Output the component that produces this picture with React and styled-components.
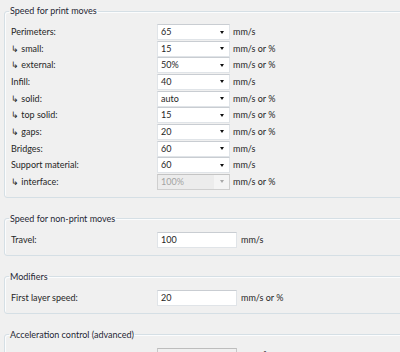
import React from 'react';
import styled, { createGlobalStyle } from 'styled-components';

const GlobalStyle = createGlobalStyle`
    html, body {
        margin: 0;
        padding: 0;
        background: #f0f0f0;
        overflow: hidden;
    }
    body {
        font-family: Lato, "Liberation Sans", sans-serif;
        font-size: 9px;
        color: #262626;
    }
`

const Page = styled.div`
    padding-top: 5px;
    width: 420px;
    display: flex;
    flex-direction: column;
    gap: 15px;
`

const Group = styled.fieldset`
    margin: 0 0 0 4px;
    padding: 7px 0 7px 6px;
    border: 1px solid #d5dfe5;
    border-radius: 3px;
    box-shadow: inset 1px 1px 0 #fbfcfd;
    min-width: 0;
`

const Legend = styled.legend`
    padding: 0 1px;
    margin-left: -2px;
    line-height: 12px;
    color: #1e2633;
`

const Rows = styled.div`
    display: grid;
    grid-template-columns: 146px auto 1fr;
    grid-auto-rows: 16px;
    row-gap: 0.67px;
    align-items: center;
`

const Label = styled.div`
    line-height: 16px;
    white-space: nowrap;
`

const Unit = styled.div`
    padding-left: ${p => p.$wide ? 4 : 3}px;
    line-height: 16px;
    white-space: nowrap;
`

const Combo = styled.div`
    box-sizing: border-box;
    width: 73px;
    height: 16px;
    display: flex;
    align-items: center;
    background: ${p => p.$disabled ? '#f4f4f4' : '#fff'};
    border: 1px solid ${p => p.$disabled ? '#cfcfcf' : '#e0e4e8'};
    border-top-color: ${p => p.$disabled ? '#c4c4c4' : '#c9cdd2'};
    color: ${p => p.$disabled ? '#a3a3a3' : '#262626'};
`

const ComboText = styled.div`
    flex: 1;
    padding-left: 3px;
    height: 100%;
    line-height: 14px;
    background: ${p => p.$disabled ? '#ececec' : 'transparent'};
`

const Arrow = styled.div`
    width: 15px;
    height: 100%;
    display: flex;
    align-items: center;
    justify-content: center;

    &::after {
        content: '';
        border-left: 2.5px solid transparent;
        border-right: 2.5px solid transparent;
        border-top: 3px solid ${p => p.$disabled ? '#a8a8a8' : '#111'};
    }
`

const TextBox = styled.div`
    box-sizing: border-box;
    width: 80px;
    height: 16px;
    padding-left: 3px;
    line-height: 14px;
    background: ${p => p.$disabled ? '#f0f0f0' : '#fff'};
    border: 1px solid ${p => p.$disabled ? '#c8c8c8' : '#e0e4e8'};
    border-top-color: ${p => p.$disabled ? '#bdbdbd' : '#c9cdd2'};
    color: ${p => p.$disabled ? '#a3a3a3' : '#262626'};
`

const groups = [
    {
        title: 'Speed for print moves',
        rows: [
            { label: 'Perimeters:', value: '65', unit: 'mm/s' },
            { label: '↳ small:', value: '15', unit: 'mm/s or %' },
            { label: '↳ external:', value: '50%', unit: 'mm/s or %' },
            { label: 'Infill:', value: '40', unit: 'mm/s' },
            { label: '↳ solid:', value: 'auto', unit: 'mm/s or %' },
            { label: '↳ top solid:', value: '15', unit: 'mm/s or %' },
            { label: '↳ gaps:', value: '20', unit: 'mm/s or %' },
            { label: 'Bridges:', value: '60', unit: 'mm/s' },
            { label: 'Support material:', value: '60', unit: 'mm/s' },
            { label: '↳ interface:', value: '100%', unit: 'mm/s or %', disabled: true },
        ],
    },
    {
        title: 'Speed for non-print moves',
        rows: [{ label: 'Travel:', value: '100', unit: 'mm/s', text: true }],
    },
    {
        title: 'Modifiers',
        rows: [{ label: 'First layer speed:', value: '20', unit: 'mm/s or %', text: true }],
    },
    {
        title: 'Acceleration control (advanced)',
        rows: [
            { label: 'Perimeters:', value: '0', unit: 'mm/s²', text: true, disabled: true },
            { label: 'Infill:', value: '0', unit: 'mm/s²', text: true, disabled: true },
        ],
    },
];

function Field({ row }) {
    if (row.text) {
        return <TextBox $disabled={row.disabled}>{row.value}</TextBox>
    }
    return (
        <Combo $disabled={row.disabled}>
            <ComboText $disabled={row.disabled}>{row.value}</ComboText>
            <Arrow $disabled={row.disabled} />
        </Combo>
    )
}

export default function App() {
    return (
        <>
            <GlobalStyle />
            <Page>
                {groups.map(group => (
                    <Group key={group.title}>
                        <Legend>{group.title}</Legend>
                        <Rows>
                            {group.rows.map(row => (
                                <React.Fragment key={row.label}>
                                    <Label>{row.label}</Label>
                                    <Field row={row} />
                                    <Unit $wide={row.text}>{row.unit}</Unit>
                                </React.Fragment>
                            ))}
                        </Rows>
                    </Group>
                ))}
            </Page>
        </>
    )
}
